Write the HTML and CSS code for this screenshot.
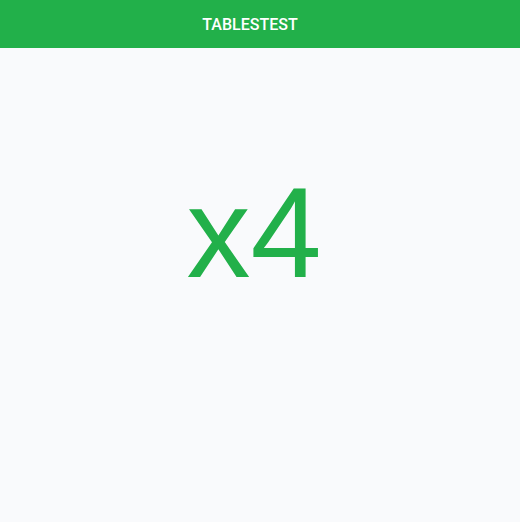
FILE: index.html
```html
<!DOCTYPE html>
<html>
<head>
<meta charset="utf-8">
<link rel="stylesheet" href="styles.css">
</head>
<body>
<header class="bar"><span class="title">TABLESTEST</span></header>
<main class="content"><div class="big">x4</div></main>
</body>
</html>
```
FILE: styles.css
```css
html, body { margin: 0; padding: 0; }
body { background: #f9fafc; width: 520px; height: 522px; overflow: hidden; font-family: Roboto, "Liberation Sans", sans-serif; }
.bar { height: 48px; background: #22b04a; display: flex; align-items: center; justify-content: center; padding-right: 20px; }
.title { color: #fff; font-size: 16px; font-weight: 500; }
.content { display: flex; justify-content: center; padding-top: 105px; padding-right: 12px; }
.big { font-family: "Liberation Sans", Arial, sans-serif; font-size: 128px; line-height: 160px; color: #22b04a; }
```
